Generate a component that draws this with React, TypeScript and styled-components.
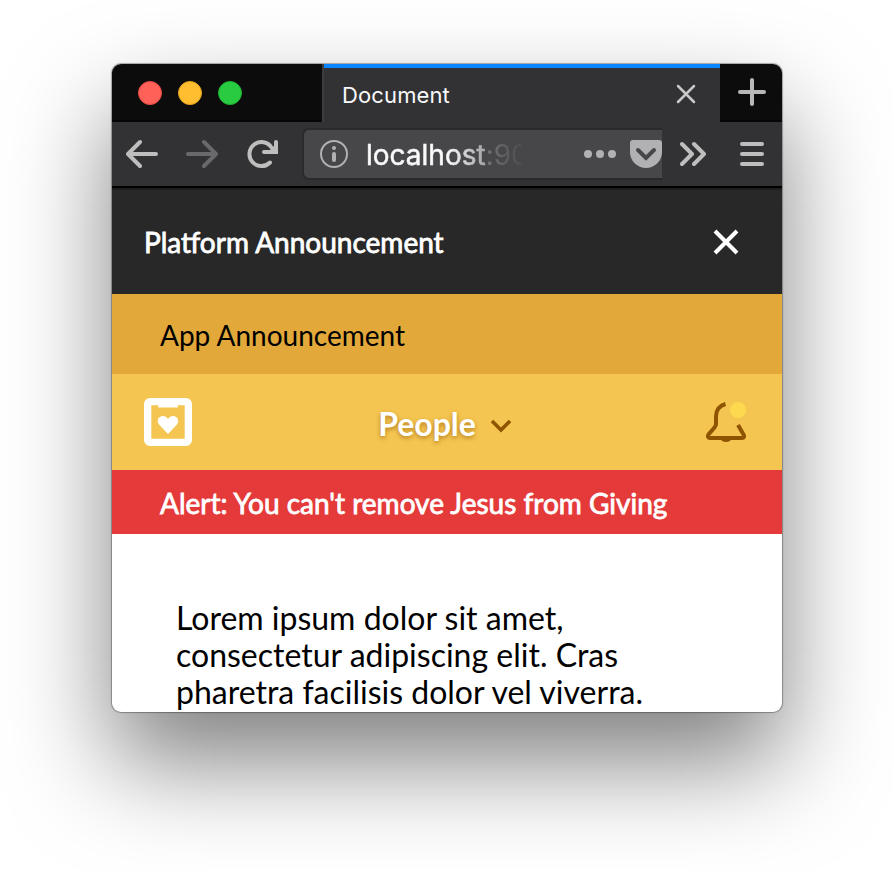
import React from 'react';
import styled, { createGlobalStyle } from 'styled-components';

const GlobalStyle = createGlobalStyle`
  * { box-sizing: border-box; }
  body { margin: 0; background: #fff; overflow: hidden; }
  svg { display: block; flex: none; }
`;

const Desktop = styled.main`
  display: flex;
  width: 894px;
  height: 872px;
  padding: 64px 112px 160px;
  overflow: hidden;
`;

const BrowserWindow = styled.section`
  display: flex;
  flex-direction: column;
  width: 670px;
  height: 648px;
  overflow: hidden;
  border-radius: 9px;
  background: #fff;
  box-shadow: 0 0 1px 1px rgba(0, 0, 0, 0.32), 0 50px 100px rgba(0, 0, 0, 0.5);
`;

const TabStrip = styled.header`
  display: flex;
  height: 58px;
  flex: none;
  background: #0c0c0d;
`;

const WindowControls = styled.div`
  display: flex;
  gap: 16px;
  width: 210px;
  padding: 17px 26px 0;
  border-bottom: 2px solid #060606;
`;

const Light = styled.span<{ $fill: string; $rim: string }>`
  width: 24px;
  height: 24px;
  border-radius: 50%;
  background: ${(p) => p.$fill};
  border: 1px solid ${(p) => p.$rim};
`;

const Tab = styled.div`
  display: flex;
  justify-content: space-between;
  width: 398px;
  padding: 0 24px 0 18px;
  border-left: 2px solid #3c3c3e;
  background: linear-gradient(#0a84ff 4px, #323234 4px);
`;

const TabTitle = styled.span`
  font: 400 22px/62px Inter, 'Liberation Sans', sans-serif;
  letter-spacing: 0.12px;
  color: #f9f9fa;
`;

const TabClose = styled.svg`
  margin-top: 20px;
`;

const NewTab = styled.div`
  flex: 1;
  padding: 12px 0 0 16px;
  border-bottom: 2px solid #060606;
`;

const Toolbar = styled.div`
  display: flex;
  height: 68px;
  flex: none;
  padding: 6px 0 0 14px;
  background: linear-gradient(#323234 64px, #000 64px, #000 66px, #1d1d1d 66px);
`;

const NavButtons = styled.div`
  display: flex;
  gap: 28px;
  width: 176px;
  padding-top: 10px;
`;

const AddressBar = styled.div`
  display: flex;
  width: 360px;
  height: 52px;
  padding-left: 16px;
  border: 2px solid #2a2a2b;
  border-right: 0;
  border-radius: 7px 0 0 7px;
  background: #474749;
  overflow: hidden;
`;

const Address = styled.span`
  width: 160px;
  margin: 0 58px 0 18px;
  overflow: hidden;
  white-space: nowrap;
  font: 400 28px/50px Inter, 'Liberation Sans', sans-serif;
  color: #f9f9fa;
  -webkit-text-stroke: 0.5px;
  mask-image: linear-gradient(90deg, #000 82px, transparent 160px);
`;

const Port = styled.span`
  color: #a3a3a5;
  -webkit-text-stroke: 0;
`;

const PageActions = styled.div`
  display: flex;
  gap: 14px;
`;

const ToolbarEnd = styled.div`
  display: flex;
  gap: 32px;
  padding: 10px 0 0 18px;
`;

const PlatformBanner = styled.div`
  display: flex;
  align-items: center;
  justify-content: space-between;
  height: 104px;
  flex: none;
  padding: 0 42px 0 32px;
  background: #282828;
`;

const BannerText = styled.span<{ $color: string; $heavy?: boolean; $spacing: string }>`
  font: 400 28px/34px Lato, sans-serif;
  letter-spacing: ${(p) => p.$spacing};
  color: ${(p) => p.$color};
  -webkit-text-stroke: ${(p) => (p.$heavy ? '0.8px' : '0')};
  white-space: nowrap;
`;

const Strip = styled.div<{ $height: number; $background: string }>`
  display: flex;
  align-items: center;
  height: ${(p) => p.$height}px;
  flex: none;
  padding: 2px 48px 0;
  background: ${(p) => p.$background};
`;

const AppBar = styled.nav`
  display: grid;
  grid-template-columns: 1fr auto 1fr;
  align-items: center;
  height: 96px;
  flex: none;
  padding: 0 36px 0 32px;
  background: #f4c550;
`;

const AppSwitcher = styled.div`
  display: flex;
  align-items: center;
  gap: 14px;
`;

const AppName = styled.span`
  font: 700 32px/40px Lato, sans-serif;
  color: #fff;
  text-shadow: 0 2px 4px rgba(143, 84, 0, 0.6);
  padding-top: 3px;
`;

const Chevron = styled.svg`
  margin-top: 8px;
`;

const BellButton = styled.div`
  justify-self: end;
`;

const Article = styled.article`
  flex: 1;
  overflow: hidden;
  padding: 65px 64px 0;
  font: 400 32px/37px Lato, sans-serif;
  color: #000;
`;

const Line = styled.div`
  white-space: nowrap;
`;

const BackIcon = ({ color }: { color: string }) => (
  <svg width="32" height="32" fill="none" stroke={color} strokeWidth="4" strokeLinecap="round" strokeLinejoin="round">
    <path d="M30 16H3M14 4L2 16l12 12" />
  </svg>
);

const ForwardIcon = ({ color }: { color: string }) => (
  <svg width="32" height="32" fill="none" stroke={color} strokeWidth="4" strokeLinecap="round" strokeLinejoin="round">
    <path d="M2 16h27M18 4l12 12-12 12" />
  </svg>
);

const ReloadIcon = () => (
  <svg width="32" height="32" fill="none" stroke="#bebebf" strokeWidth="4" strokeLinecap="round">
    <path d="M24 24.5A12 12 0 1 1 25.5 9.5" />
    <path d="M30 4v10H18" />
    <path d="M23 13l7-7v8z" fill="#bebebf" stroke="none" />
  </svg>
);

const InfoIcon = () => (
  <svg width="28" height="48" fill="none" stroke="#b1b1b3">
    <circle cx="14" cy="24" r="13" strokeWidth="2" />
    <circle cx="14" cy="18" r="2" fill="#b1b1b3" stroke="none" />
    <path d="M14 24v6" strokeWidth="4" strokeLinecap="round" />
  </svg>
);

const HeartLogo = () => (
  <svg width="48" height="48">
    <path
      fill="#fff"
      fillRule="evenodd"
      d="M6 0h36a6 6 0 0 1 6 6v36a6 6 0 0 1-6 6H6a6 6 0 0 1-6-6V6a6 6 0 0 1 6-6zM7.3 7.2v33.6h33.4V7.2h-6.9v2.3H14.2V7.2z"
    />
    <path
      fill="#fff"
      d="M24 36L15.2 26.8c-3-3.4-.9-8.7 3.6-8.7 2.3 0 4 1 5.2 2.9 1.2-1.9 2.9-2.9 5.2-2.9 4.5 0 6.600 5.300 3.600 8.700z"
    />
  </svg>
);

const BellIcon = () => (
  <svg width="40" height="40" fill="none">
    <path
      d="M19.500 2C12.500 4 10 8 10 14.500V22c0 1.500-.5 2.300-1.500 3.500L2.500 32.500C1.300 34.500 2 36 4 36h32c2 0 2.700-1.500 1.500-3.500l-5.500-9.500"
      stroke="#8f5400"
      strokeWidth="4"
    />
    <path d="M14 36h12c-.8 2.600-3 4-6 4s-5.200-1.400-6-4z" fill="#8f5400" />
    <circle cx="32" cy="8" r="8" fill="#fdd94f" />
  </svg>
);

export default function App() {
  return (
    <Desktop>
      <GlobalStyle />
      <BrowserWindow>
        <TabStrip>
          <WindowControls>
            <Light $fill="#ff6058" $rim="#e94b43" />
            <Light $fill="#ffbe2f" $rim="#e6a51e" />
            <Light $fill="#29cc41" $rim="#1eb233" />
          </WindowControls>
          <Tab>
            <TabTitle>Document</TabTitle>
            <TabClose width="20" height="20" stroke="#c8c8c9" strokeWidth="2.5" strokeLinecap="round">
              <path d="M2 2l16 16M18 2L2 18" />
            </TabClose>
          </Tab>
          <NewTab>
            <svg width="32" height="32" stroke="#b9b9ba" strokeWidth="4" strokeLinecap="round">
              <path d="M16 4v24M4 16h24" />
            </svg>
          </NewTab>
        </TabStrip>
        <Toolbar>
          <NavButtons>
            <BackIcon color="#bebebf" />
            <ForwardIcon color="#69696b" />
            <ReloadIcon />
          </NavButtons>
          <AddressBar>
            <InfoIcon />
            <Address>
              localhost<Port>:9000</Port>
            </Address>
            <PageActions>
              <svg width="36" height="48" fill="#b1b1b3">
                <circle cx="8" cy="24" r="4" />
                <circle cx="20" cy="24" r="4" />
                <circle cx="32" cy="24" r="4" />
              </svg>
              <svg width="32" height="48">
                <path d="M3 10h26a3 3 0 0 1 3 3v9a16 16 0 0 1-32 0v-9a3 3 0 0 1 3-3z" fill="#b1b1b3" />
                <path d="M8 20l8 8 8-8" fill="none" stroke="#474749" strokeWidth="4" strokeLinecap="round" />
              </svg>
            </PageActions>
          </AddressBar>
          <ToolbarEnd>
            <svg width="28" height="32" fill="none" stroke="#bebebf" strokeWidth="4" strokeLinecap="round" strokeLinejoin="round">
              <path d="M2 6l10 10L2 26M14 6l10 10-10 10" />
            </svg>
            <svg width="24" height="32" stroke="#bebebf" strokeWidth="4" strokeLinecap="round">
              <path d="M2 6h20M2 16h20M2 26h20" />
            </svg>
          </ToolbarEnd>
        </Toolbar>
        <PlatformBanner>
          <BannerText $color="#fff" $heavy $spacing="0">
            Platform Announcement
          </BannerText>
          <svg width="28" height="28" stroke="#fff" strokeWidth="4">
            <path d="M3 3l22 22M25 3L3 25" />
          </svg>
        </PlatformBanner>
        <Strip $height={80} $background="#e3a83a">
          <BannerText $color="#000" $spacing="0">
            App Announcement
          </BannerText>
        </Strip>
        <AppBar>
          <HeartLogo />
          <AppSwitcher>
            <AppName>People</AppName>
            <Chevron width="22" height="14" fill="none" stroke="#8f5400" strokeWidth="3.6">
              <path d="M2 2l9 9 9-9" />
            </Chevron>
          </AppSwitcher>
          <BellButton>
            <BellIcon />
          </BellButton>
        </AppBar>
        <Strip $height={64} $background="#e53a3a">
          <BannerText $color="#fff" $heavy $spacing="0">
            Alert: You can't remove Jesus from Giving
          </BannerText>
        </Strip>
        <Article>
          <Line>Lorem ipsum dolor sit amet,</Line>
          <Line>consectetur adipiscing elit. Cras</Line>
          <Line>pharetra facilisis dolor vel viverra.</Line>
        </Article>
      </BrowserWindow>
    </Desktop>
  );
}
